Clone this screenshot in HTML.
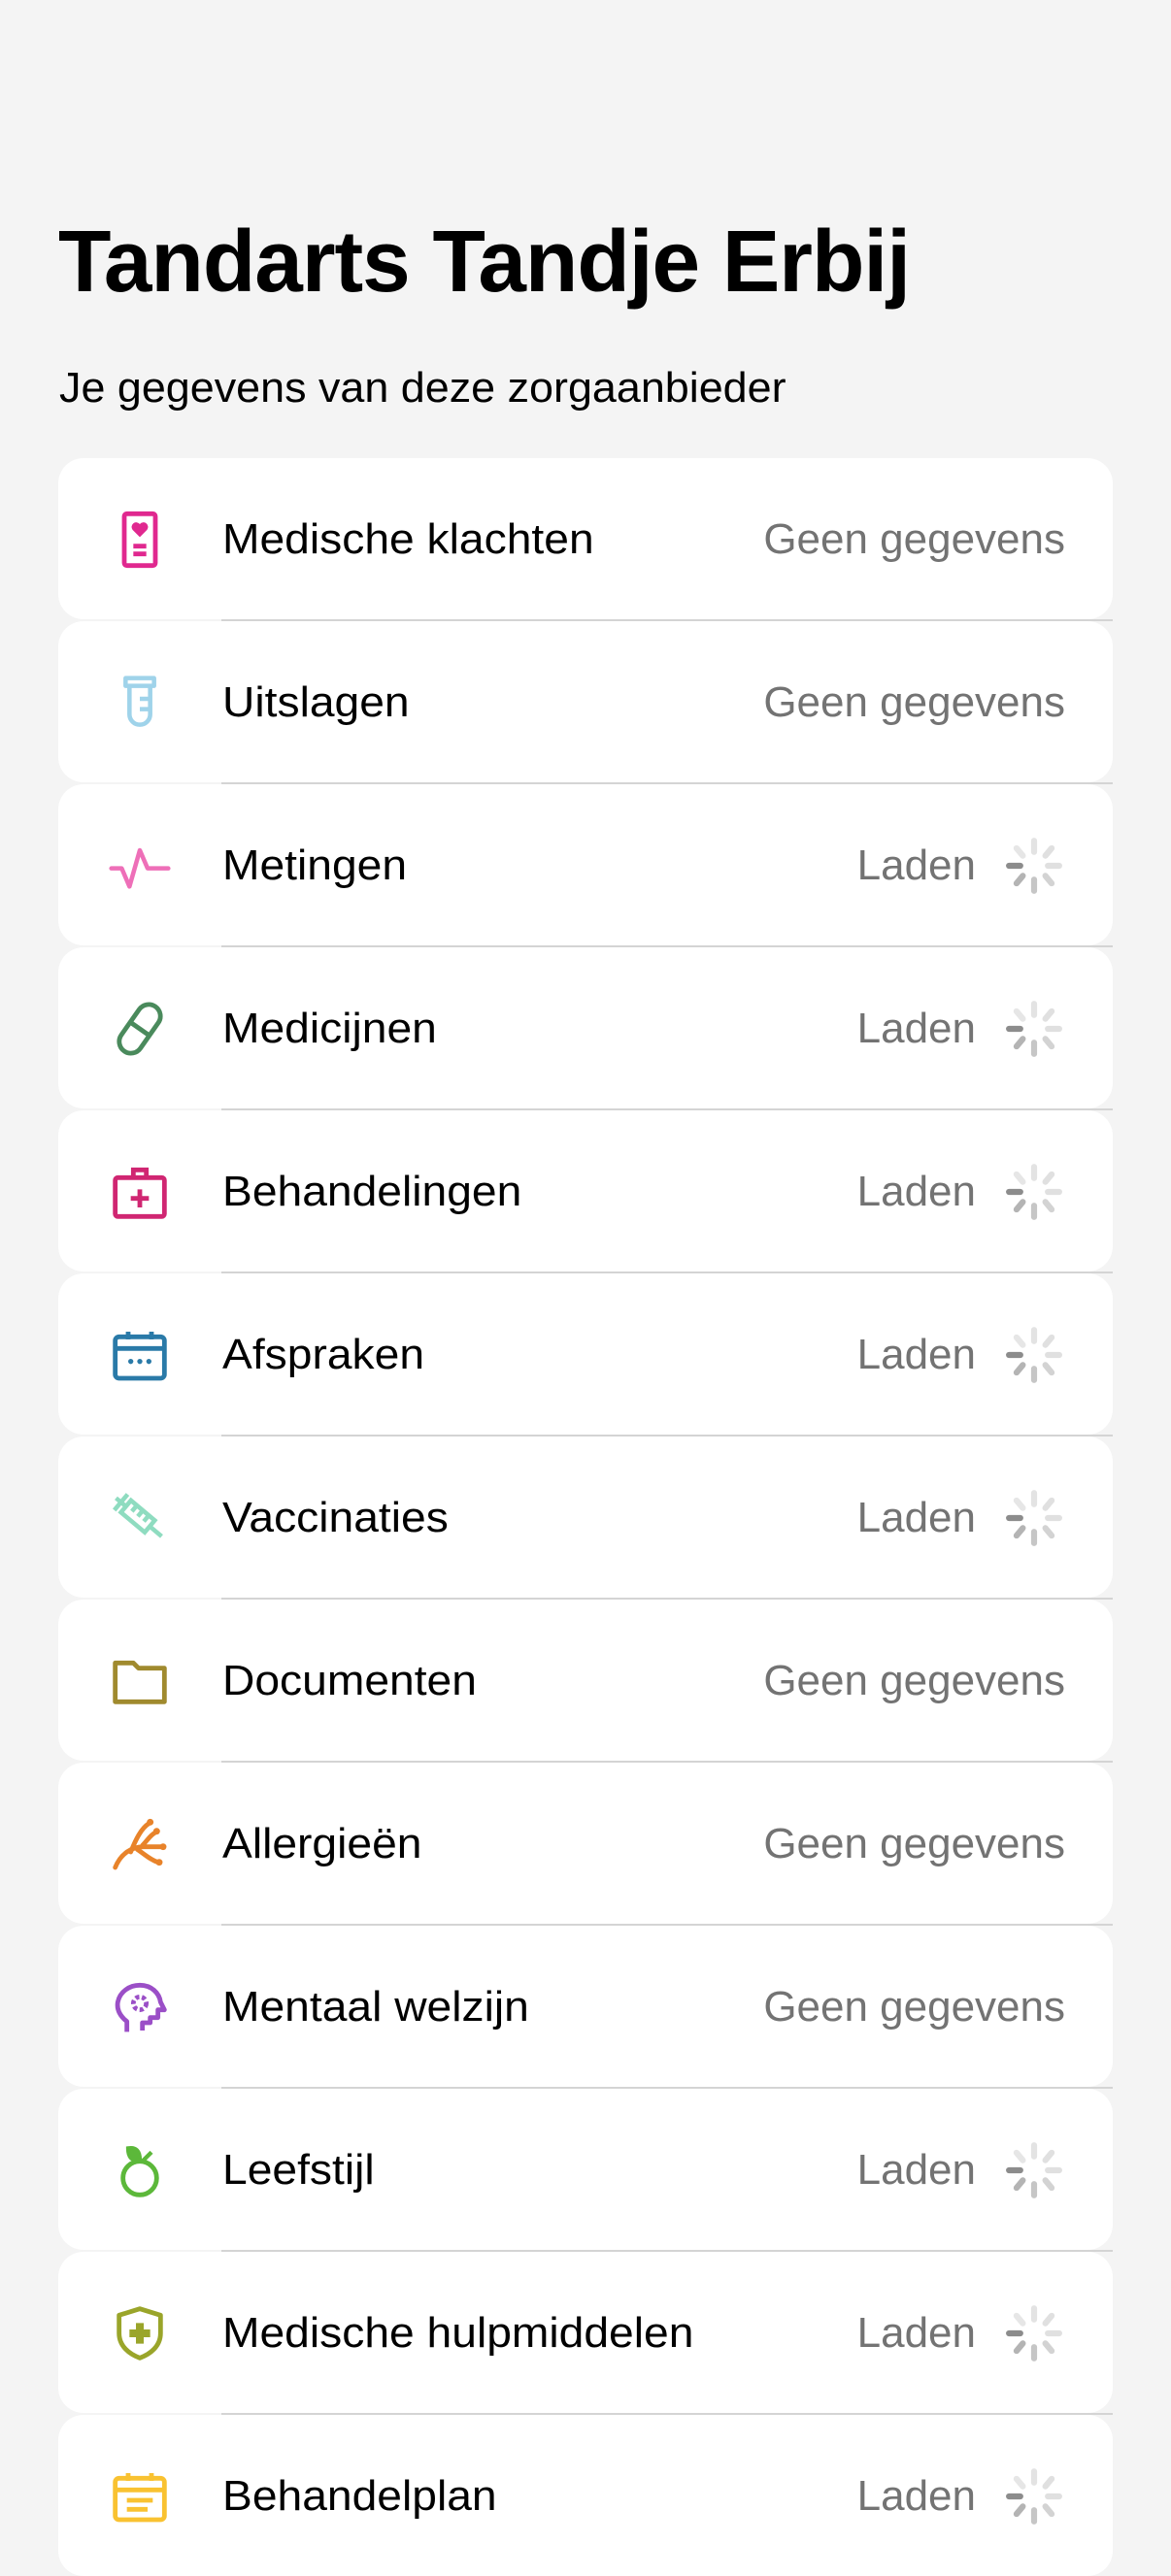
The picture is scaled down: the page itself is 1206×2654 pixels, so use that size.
<!DOCTYPE html>
<html><head><meta charset="utf-8"><style>
*{margin:0;padding:0;box-sizing:border-box}
body{width:1206px;height:2622px;background:#f4f4f4;font-family:"Liberation Sans",sans-serif;overflow:hidden;position:relative}
h1{position:absolute;left:60px;top:219px;font-size:90px;font-weight:bold;color:#000;white-space:nowrap;transform:scaleX(.99);transform-origin:left;letter-spacing:-1px}
.sub{position:absolute;left:61px;top:375px;font-size:44px;color:#000;white-space:nowrap;transform:scaleX(1.02);transform-origin:left}
.card{position:absolute;left:60px;width:1086px;height:166px;background:#fff;border-radius:26px}
.sep{position:absolute;left:228px;width:918px;height:2px;background:#d4d4d4}
.ic{position:absolute;left:112px;width:64px;height:64px}
.lb{position:absolute;left:229px;font-size:44px;color:#000;white-space:nowrap;transform:scaleX(1.05);transform-origin:left;line-height:56px}
.st{position:absolute;font-size:44px;color:#737373;white-space:nowrap;line-height:56px;transform:scaleX(1.0);transform-origin:right}
.sp{position:absolute;left:1034px;width:62px;height:62px}
</style></head><body>
<h1>Tandarts Tandje Erbij</h1>
<div class="sub">Je gegevens van deze zorgaanbieder</div>
<svg width="0" height="0" style="position:absolute"><defs>
<g id="spin" stroke-linecap="round" stroke-width="2.4">
<line x1="12" y1="2" x2="12" y2="6.5" stroke="#e3e3e3"/>
<line x1="19" y1="5" x2="16.5" y2="8" stroke="#e0e0e0"/>
<line x1="22" y1="12" x2="17.5" y2="12" stroke="#e0e0e0"/>
<line x1="19" y1="19" x2="16.5" y2="16" stroke="#d3d3d3"/>
<line x1="12" y1="22" x2="12" y2="17.5" stroke="#c6c6c6"/>
<line x1="5" y1="19" x2="7.5" y2="16" stroke="#b4b4b4"/>
<line x1="2" y1="12" x2="6.5" y2="12" stroke="#8c8c8c"/>
<line x1="5" y1="5" x2="7.5" y2="8" stroke="#e6e6e6"/>
</g></defs></svg>
<div id="rows"></div>
<script>
const rows=[
["Medische klachten","g",'<rect x="6" y="2" width="12" height="20" rx="1" fill="none" stroke="#e0288f" stroke-width="1.8"/><path d="M12 11 L9.2 8.2 A1.6 1.6 0 0 1 12 6 A1.6 1.6 0 0 1 14.8 8.2Z" fill="#e0288f"/><path d="M9.5 14.5h5M9.5 17.5h5" stroke="#e0288f" stroke-width="1.8"/>'],
["Uitslagen","g",'<path d="M6.5 2.5h11v3h-11z M8 5.5v11a4 4 0 0 0 8 0v-11 M12 10.5h4M12 14.5h4" fill="none" stroke="#9fd3ea" stroke-width="1.7" stroke-linejoin="round"/>'],
["Metingen","l",'<path d="M1 13h4l3 7 4-14 3 7h8" fill="none" stroke="#ee6fb8" stroke-width="1.7" stroke-linejoin="round" stroke-linecap="round"/>'],
["Medicijnen","l",'<g transform="rotate(-55 12 12)"><rect x="1.5" y="7.5" width="21" height="9" rx="4.5" fill="none" stroke="#4a8a5c" stroke-width="1.8"/><path d="M12 7.5v9" stroke="#4a8a5c" stroke-width="1.8"/></g>'],
["Behandelingen","l",'<rect x="2.5" y="6.5" width="19" height="15" rx="1" fill="none" stroke="#d02672" stroke-width="1.8"/><path d="M9.5 6.5V3.5h5v3M12 11v7M8.5 14.5h7" fill="none" stroke="#d02672" stroke-width="1.8"/>'],
["Afspraken","l",'<rect x="2.5" y="5" width="19" height="16" rx="1.5" fill="none" stroke="#2a7aa8" stroke-width="1.8"/><path d="M2.5 9.5h19M7.5 3v3M16.5 3v3" stroke="#2a7aa8" stroke-width="1.8"/><circle cx="8.5" cy="14.5" r="1" fill="#2a7aa8"/><circle cx="12" cy="14.5" r="1" fill="#2a7aa8"/><circle cx="15.5" cy="14.5" r="1" fill="#2a7aa8"/>'],
["Vaccinaties","l",'<g transform="rotate(40 12 12)" fill="none" stroke="#8fdcc0" stroke-width="1.7"><rect x="5" y="9" width="12" height="6"/><path d="M17 12h6M0 12h5M2.5 8v8M8 9v3M11 9v3M14 9v3"/></g>'],
["Documenten","g",'<path d="M2.5 5h7l2 2h10v13h-19z" fill="none" stroke="#a08a2e" stroke-width="1.8" stroke-linejoin="round"/>'],
["Allergieën","g",'<g fill="none" stroke="#e8832a" stroke-width="1.8" stroke-linecap="round"><path d="M2.5 21c2-5 6-8 11-8h7M8.5 15c2-5 4-9 7-11M11 14c3 2 5 4 8 5M13 12.5c2-2 3-4 5-5"/></g><g fill="#e8832a"><circle cx="16" cy="3.5" r="1.3"/><circle cx="18.5" cy="7" r="1.3"/><circle cx="21" cy="13" r="1.3"/><circle cx="19.5" cy="19" r="1.3"/></g>'],
["Mentaal welzijn","g",'<path d="M7 21.5v-4C4.5 15.5 3 13 3.5 10c.8-4 4.5-6.5 8.5-6.5 4.5 0 7.5 3 8 6.5l1.5 3h-2.5v3h-3v2h-3v3" fill="none" stroke="#9b4fc7" stroke-width="1.8" stroke-linejoin="round"/><circle cx="12" cy="10.5" r="2.5" fill="none" stroke="#9b4fc7" stroke-width="1.8" stroke-dasharray="1.5 1"/>'],
["Leefstijl","l",'<circle cx="12" cy="15" r="6.5" fill="none" stroke="#5cb83a" stroke-width="1.8"/><path d="M7.5 3.5c3-.5 4.5 1 4.5 4.5-3 .5-4.5-1-4.5-4.5z M13 8.5l3.5-3.5" fill="#5cb83a" stroke="#5cb83a" stroke-width="1.6"/>'],
["Medische hulpmiddelen","l",'<path d="M12 2.5l8 2.5v7c0 5-4 8-8 9.5-4-1.5-8-4.5-8-9.5V5z" fill="none" stroke="#9aa52a" stroke-width="1.8" stroke-linejoin="round"/><path d="M12 8v8M8 12h8" stroke="#9aa52a" stroke-width="3"/>'],
["Behandelplan","l",'<rect x="2.5" y="5" width="19" height="16" rx="1.5" fill="none" stroke="#f9c231" stroke-width="1.8"/><path d="M2.5 9.5h19M7.5 3v3M16.5 3v3M7 13.5h10M7 17h8" stroke="#f9c231" stroke-width="1.8"/>']
];
let h="";
rows.forEach((r,i)=>{
 const top=472+168*i, c=top+84;
 h+=`<div class="card" style="top:${top}px"></div>`;
 if(i<12) h+=`<div class="sep" style="top:${top+166}px"></div>`;
 h+=`<svg class="ic" style="top:${c-32}px" viewBox="0 0 24 24">${r[2]}</svg>`;
 h+=`<div class="lb" style="top:${c-28}px">${r[0]}</div>`;
 if(r[1]=="g") h+=`<div class="st" style="top:${c-28}px;right:109px">Geen gegevens</div>`;
 else { h+=`<div class="st" style="top:${c-28}px;right:201px">Laden</div>`;
  h+=`<svg class="sp" style="top:${c-31}px" viewBox="0 0 24 24"><use href="#spin"/></svg>`;}
});
document.getElementById("rows").innerHTML=h;
</script>
</body></html>
